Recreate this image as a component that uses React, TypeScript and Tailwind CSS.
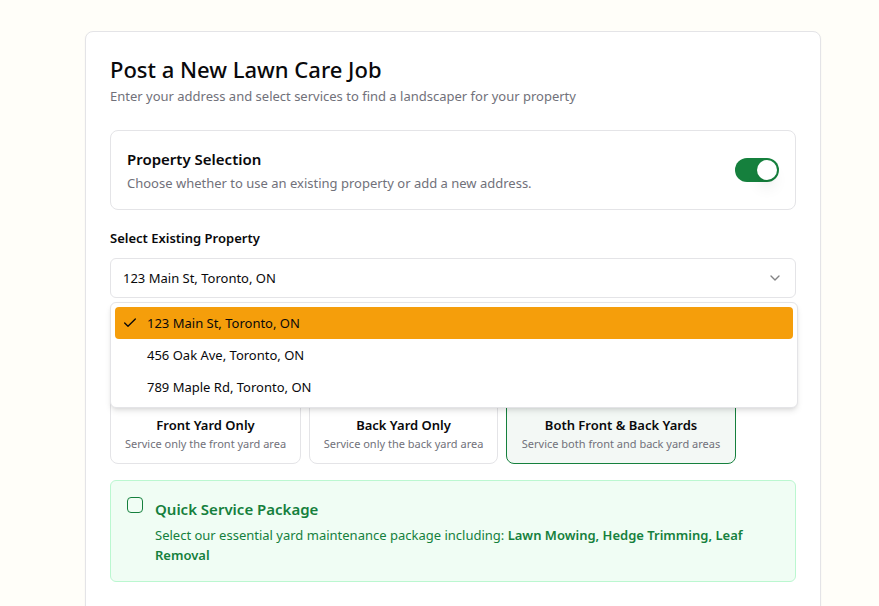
import { useState } from "react";
import { Check, ChevronDown } from "lucide-react";

const properties = [
  "123 Main St, Toronto, ON",
  "456 Oak Ave, Toronto, ON",
  "789 Maple Rd, Toronto, ON",
];

const areas = [
  { title: "Front Yard Only", text: "Service only the front yard area" },
  { title: "Back Yard Only", text: "Service only the back yard area" },
  { title: "Both Front & Back Yards", text: "Service both front and back yard areas" },
];

export default function App() {
  const [existing, setExisting] = useState(true);
  const [property, setProperty] = useState(properties[0]);
  const [area, setArea] = useState(2);

  return (
    <div className="min-h-screen bg-[#fffef9] pt-[31px] pr-[58px] pl-[85px] font-['Noto_Sans','Open_Sans',sans-serif] text-[13px] leading-5 text-[#09090b]">
      <main className="rounded-lg border border-[#e4e4e7] bg-white p-6 pb-12 shadow-xs">
        <header className="flex flex-col gap-1">
          <h1 className="text-[22px] leading-[26px] font-medium">Post a New Lawn Care Job</h1>
          <p className="text-[#71717a]">
            Enter your address and select services to find a landscaper for your property
          </p>
        </header>

        <section className="mt-6 flex items-center justify-between rounded-lg border border-[#e4e4e7] p-4">
          <div className="flex flex-col gap-0.5">
            <label htmlFor="existing" className="text-[15px] leading-6 font-semibold">
              Property Selection
            </label>
            <p className="text-[#71717a]">Choose whether to use an existing property or add a new address.</p>
          </div>
          <input
            id="existing"
            type="checkbox"
            role="switch"
            checked={existing}
            onChange={(e) => setExisting(e.target.checked)}
            className="h-6 w-11 appearance-none rounded-full bg-[#e4e4e7] p-0.5 before:block before:size-5 before:rounded-full before:bg-white before:shadow-lg checked:bg-[#15803d] checked:before:translate-x-5"
          />
        </section>

        <div className="mt-[18px] flex flex-col gap-2.5">
          <label htmlFor="property" className="font-semibold">
            Select Existing Property
          </label>
          <div className="relative">
            <select
              id="property"
              value={property}
              onChange={(e) => setProperty(e.target.value)}
              className="block h-10 w-full appearance-none rounded-md border border-[#e4e4e7] bg-white px-3"
            >
              {properties.map((p) => (
                <option key={p}>{p}</option>
              ))}
            </select>
            <ChevronDown className="pointer-events-none absolute top-3 right-[13px] size-4 opacity-50" />
            <ul
              role="listbox"
              aria-label="Properties"
              className="absolute top-11 -right-0.5 left-0 z-10 rounded-md border border-[#e4e4e7] bg-white p-1 shadow-md"
            >
              {properties.map((p) => (
                <li
                  key={p}
                  role="option"
                  aria-selected={p === property}
                  onClick={() => setProperty(p)}
                  className="flex h-8 items-center gap-2.5 rounded-sm px-2 aria-selected:bg-[#f59e0b]"
                >
                  <span className="flex size-3.5 items-center justify-center">
                    {p === property && <Check className="size-4 shrink-0" />}
                  </span>
                  {p}
                </li>
              ))}
            </ul>
          </div>
        </div>

        <div role="group" aria-label="Service area" className="mt-17 grid grid-cols-[191px_189px_230px] gap-2">
          {areas.map((a, i) => (
            <button
              key={a.title}
              type="button"
              aria-pressed={i === area}
              onClick={() => setArea(i)}
              className="flex h-[98px] flex-col items-center justify-end rounded-lg border border-[#e4e4e7] pb-2.5 whitespace-nowrap aria-pressed:border-[#15803d] aria-pressed:bg-[#f3f8f5]"
            >
              <span className="font-semibold">{a.title}</span>
              <span className="text-[11px] leading-[18px] text-[#71717a]">{a.text}</span>
            </button>
          ))}
        </div>

        <section className="mt-4 flex gap-3 rounded-md border border-[#bbf7d0] bg-[#f0fdf4] p-4 text-[#15803d]">
          <input
            id="quick"
            type="checkbox"
            className="size-4 shrink-0 appearance-none rounded-sm border border-[#15803d] checked:bg-[#15803d]"
          />
          <div className="flex flex-col gap-1">
            <label htmlFor="quick" className="text-[15px] leading-6 font-semibold">
              Quick Service Package
            </label>
            <p>
              Select our essential yard maintenance package including:{" "}
              <strong className="font-semibold">Lawn Mowing, Hedge Trimming, Leaf Removal</strong>
            </p>
          </div>
        </section>
      </main>
    </div>
  );
}
